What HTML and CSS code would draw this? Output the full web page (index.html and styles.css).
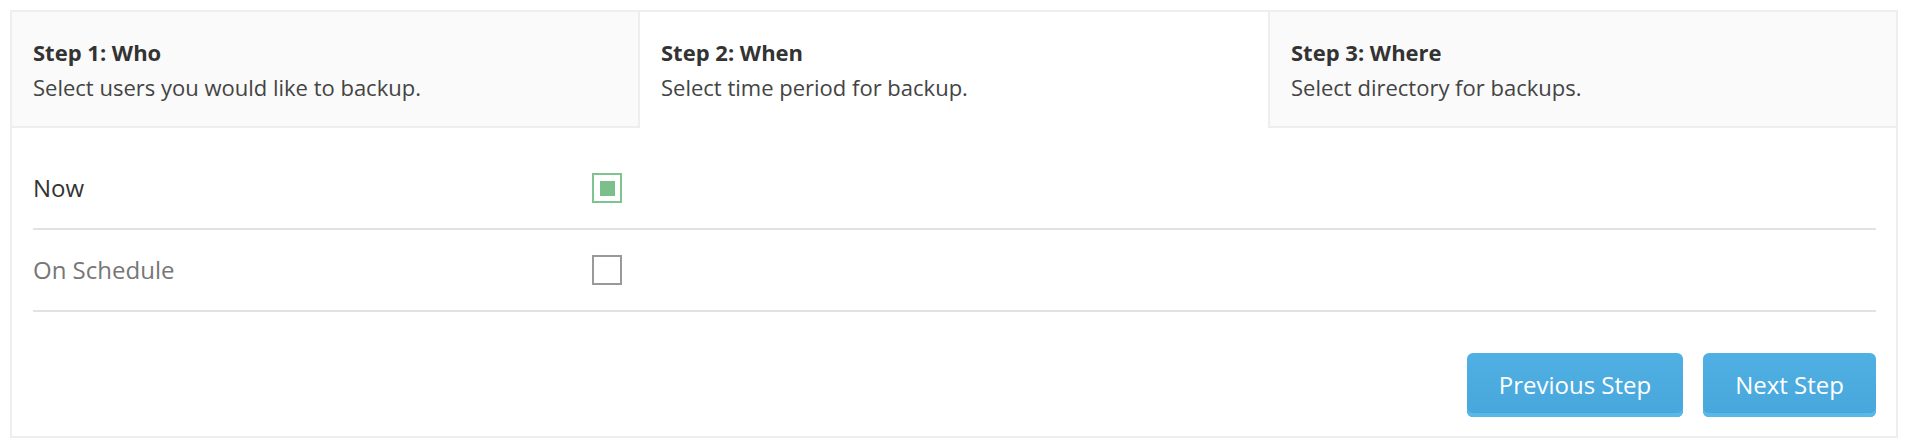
FILE: index.html
```html
<!DOCTYPE html>
<html>
<head>
<meta charset="utf-8">
<link rel="stylesheet" href="styles.css">
</head>
<body>
<div class="wizard">
  <div class="steps">
    <div class="step step-first">
      <div class="step-title">Step 1: Who</div>
      <div class="step-desc">Select users you would like to backup.</div>
    </div>
    <div class="step step-active">
      <div class="step-title">Step 2: When</div>
      <div class="step-desc">Select time period for backup.</div>
    </div>
    <div class="step step-last">
      <div class="step-title">Step 3: Where</div>
      <div class="step-desc">Select directory for backups.</div>
    </div>
  </div>
  <div class="content">
    <div class="options">
      <div class="option">
        <div class="option-label">Now</div>
        <span class="check check-on"><span class="check-mark"></span></span>
      </div>
      <div class="option">
        <div class="option-label option-muted">On Schedule</div>
        <span class="check"></span>
      </div>
    </div>
    <div class="actions">
      <button class="btn">Previous Step</button>
      <button class="btn">Next Step</button>
    </div>
  </div>
</div>
</body>
</html>
```
FILE: styles.css
```css
html, body {
  margin: 0;
  padding: 0;
  background: #fff;
}
body {
  padding: 10px 8px 10px 10px;
  font-family: "Open Sans", "Liberation Sans", sans-serif;
  color: #333;
}
.wizard {
  border: 2px solid #eeeeee;
  height: 424px;
  display: flex;
  flex-direction: column;
}
.steps {
  display: grid;
  grid-template-columns: 1fr 1fr 1fr;
  height: 116px;
  flex-shrink: 0;
}
.step {
  background: #fafafa;
  padding: 26px 21px 0 21px;
  border-bottom: 2px solid #eeeeee;
}
.step-first {
  border-right: 2px solid #eeeeee;
}
.step-last {
  border-left: 2px solid #eeeeee;
}
.step-active {
  background: #fff;
  border-bottom-color: #fff;
}
.step-title {
  font-weight: 700;
  font-size: 22px;
  line-height: 28px;
  color: #333;
}
.step-desc {
  font-size: 22px;
  line-height: 28px;
  margin-top: 7px;
  color: #444;
}
.content {
  flex: 1;
  padding: 20px 20px 0 21px;
  display: flex;
  flex-direction: column;
}
.options {
  display: flex;
  flex-direction: column;
}
.option {
  display: flex;
  align-items: center;
  height: 80px;
  border-bottom: 2px solid #e2e2e2;
}
.option-label {
  width: 559px;
  font-size: 24px;
  color: #333;
  padding-bottom: 1px;
}
.option-muted {
  color: #777;
}
.check {
  width: 26px;
  height: 26px;
  border: 2px solid #999;
  display: flex;
  align-items: center;
  justify-content: center;
  box-sizing: content-box;
}
.check-on {
  border-color: #7ec48f;
}
.check-mark {
  width: 15px;
  height: 15px;
  background: #7dbf8b;
}
.actions {
  display: flex;
  justify-content: flex-end;
  gap: 20px;
  margin-top: 41px;
}
.btn {
  font-family: "Open Sans", "Liberation Sans", sans-serif;
  font-size: 24px;
  color: #fff;
  height: 64px;
  padding: 0 32px 2px;
  border: none;
  border-radius: 6px;
  background: linear-gradient(#50b0e3, #47a6db);
  box-shadow: inset 0 -4px 0 #58b8e8, inset 0 -5px 0 #4aa5d6;
  cursor: pointer;
}
```
